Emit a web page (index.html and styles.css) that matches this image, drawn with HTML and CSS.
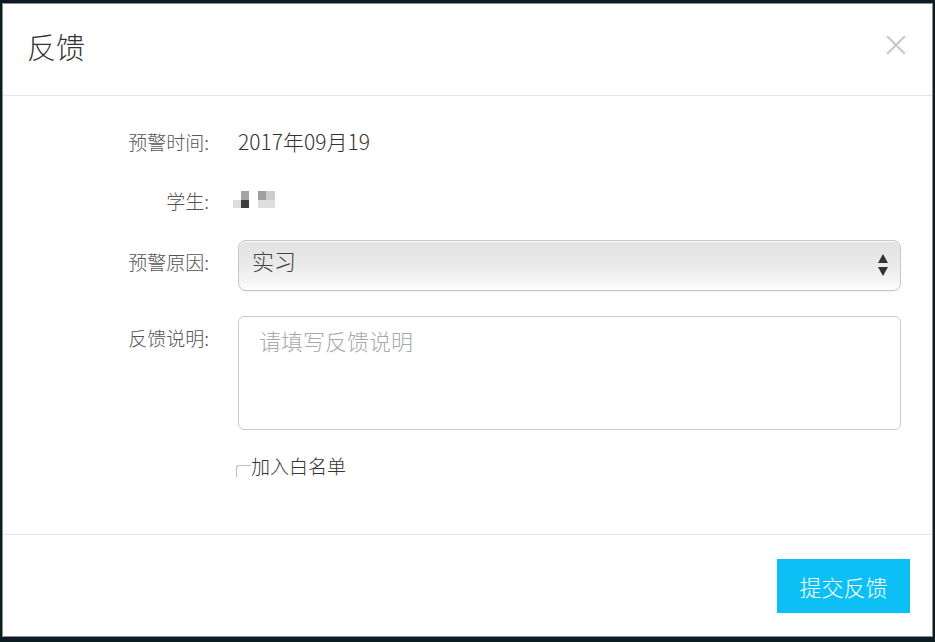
FILE: index.html
```html
<!DOCTYPE html>
<html lang="zh-CN">
<head>
    <meta charset="UTF-8">
    <meta name="viewport" content="width=device-width, initial-scale=1.0">
    <title>反馈</title>
    <link rel="stylesheet" href="styles.css">
</head>
<body>
    <div class="modal">
        <div class="modal-header">
            <h3 class="modal-title">反馈</h3>
            <button class="close" type="button">
                <svg width="20" height="18" viewBox="0 0 20 18">
                    <path d="M1 0 L19 18 M19 0 L1 18" stroke="#c9c9c9" stroke-width="2.2" fill="none"/>
                </svg>
            </button>
        </div>
        <div class="modal-body">
            <div class="form-row row-date">
                <label class="form-label">预警时间:</label>
                <div class="form-value date-value">2017年09月19</div>
            </div>
            <div class="form-row row-student">
                <label class="form-label">学生:</label>
                <div class="form-value">
                    <svg class="masked-name" width="44" height="20" viewBox="0 0 44 20">
                        <rect x="0" y="10" width="8" height="8" fill="#dcdcdc"/>
                        <rect x="8" y="1" width="8" height="9" fill="#a3a3a3"/>
                        <rect x="8" y="10" width="8" height="8" fill="#3e3e3e"/>
                        <rect x="25" y="1" width="8" height="9" fill="#a0a0a0"/>
                        <rect x="33" y="1" width="9" height="9" fill="#cbcbcb"/>
                        <rect x="25" y="10" width="17" height="8" fill="#dedede"/>
                    </svg>
                </div>
            </div>
            <div class="form-row row-reason">
                <label class="form-label">预警原因:</label>
                <div class="form-value select-wrap">
                    <select class="form-select">
                        <option>实习</option>
                    </select>
                    <svg class="select-arrows" width="10" height="22" viewBox="0 0 10 22">
                        <path d="M5 0 L10 9 L0 9 Z" fill="#333"/>
                        <path d="M0 13 L10 13 L5 22 Z" fill="#333"/>
                    </svg>
                </div>
            </div>
            <div class="form-row row-note">
                <label class="form-label">反馈说明:</label>
                <div class="form-value">
                    <textarea class="form-textarea" placeholder="请填写反馈说明"></textarea>
                </div>
            </div>
            <div class="form-row row-check">
                <div class="form-label"></div>
                <label class="form-value check-label">
                    <span class="check-box"></span>加入白名单
                </label>
            </div>
        </div>
        <div class="modal-footer">
            <button class="btn-submit" type="button">提交反馈</button>
        </div>
    </div>
</body>
</html>
```

FILE: styles.css
```css
* {
    box-sizing: border-box;
}
body {
    margin: 0;
    background-color: #0d1b22;
    font-family: "Noto Sans CJK SC", "Noto Sans", sans-serif;
    font-weight: 300;
    color: #333;
}
.modal {
    margin: 3px 2px 5px 2px;
    height: 634px;
    border: 1px solid #8d8d8d;
    background-color: #fff;
}
.modal-header {
    height: 92px;
    display: flex;
    align-items: center;
    justify-content: space-between;
    padding: 0 26px 6px 24px;
    border-bottom: 1px solid #e5e5e5;
}
.modal-title {
    margin: 0;
    font-size: 29px;
    font-weight: 300;
    line-height: 1;
    color: #333;
}
.close {
    align-self: flex-start;
    margin-top: 32px;
    padding: 0;
    border: none;
    background: none;
    line-height: 0;
    cursor: pointer;
}
.modal-body {
    height: 439px;
    padding: 22px 31px 0 0;
    border-bottom: 1px solid #e5e5e5;
}
.form-row {
    display: flex;
}
.form-label {
    flex: 0 0 206px;
    text-align: right;
    font-size: 19px;
    color: #555;
}
.form-value {
    flex: 1;
    margin-left: 29px;
}
.row-date {
    height: 48px;
    line-height: 47px;
}
.date-value {
    font-size: 21px;
    color: #333;
}
.row-student {
    margin-top: 11px;
    height: 48px;
    line-height: 48px;
}
.masked-name {
    vertical-align: middle;
    margin-left: -5px;
    margin-top: -8px;
}
.row-reason {
    margin-top: 15px;
}
.row-reason .form-label {
    line-height: 44px;
}
.select-wrap {
    position: relative;
}
.form-select {
    -webkit-appearance: none;
    appearance: none;
    width: 100%;
    height: 51px;
    padding: 0 0 12px 13px;
    border: 1px solid #c6c6c6;
    border-radius: 8px;
    background: linear-gradient(#e2e2e2, #e9e9e9 45%, #f6f6f6 85%, #fff);
    box-shadow: inset 0 1px 1px rgba(255, 255, 255, 0.9), 0 1px 1px rgba(0, 0, 0, 0.06);
    font-family: inherit;
    font-weight: 300;
    font-size: 22px;
    color: #444;
    outline: none;
}
.select-arrows {
    position: absolute;
    right: 13px;
    top: 14px;
}
.row-note {
    margin-top: 25px;
}
.row-note .form-label {
    line-height: 44px;
}
.form-textarea {
    display: block;
    width: 100%;
    height: 114px;
    padding: 8px 20px;
    border: 1px solid #cbcbcb;
    border-radius: 6px;
    font-family: inherit;
    font-weight: 300;
    font-size: 22px;
    line-height: 1.4;
    color: #333;
    resize: none;
    outline: none;
}
.form-textarea::placeholder {
    color: #a9a9a9;
}
.row-check {
    margin-top: 24px;
}
.check-label {
    display: flex;
    align-items: center;
    margin-left: 27px;
    font-size: 19px;
    line-height: 24px;
    color: #333;
}
.check-box {
    display: inline-block;
    width: 15px;
    height: 12px;
    margin-top: 10px;
    border-top: 1px solid #bbb;
    border-left: 1px solid #bbb;
    border-radius: 3px 0 0 0;
}
.modal-footer {
    display: flex;
    justify-content: flex-end;
    padding: 24px 22px 0 0;
}
.btn-submit {
    width: 133px;
    height: 54px;
    border: none;
    background-color: #0cbff5;
    color: #fff;
    font-family: inherit;
    font-weight: 300;
    font-size: 22px;
    cursor: pointer;
}
```
